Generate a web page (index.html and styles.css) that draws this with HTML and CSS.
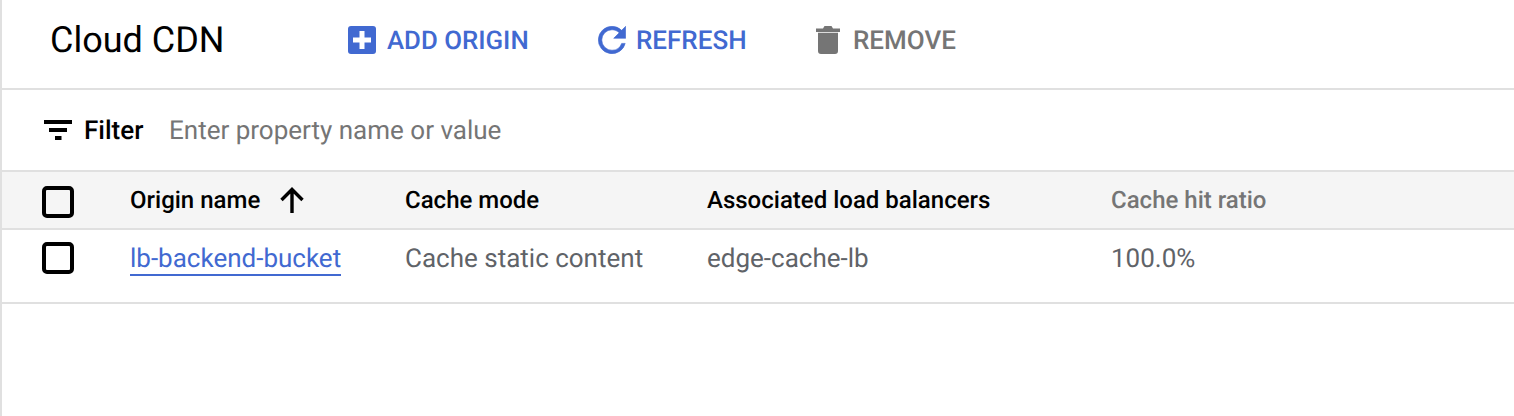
FILE: index.html
```html
<!DOCTYPE html>
<html lang="en">
<head>
<meta charset="utf-8">
<title>Cloud CDN</title>
<link rel="stylesheet" href="styles.css">
</head>
<body>
<div class="page">
  <header class="toolbar">
    <h1 class="title">Cloud CDN</h1>
    <div class="actions">
      <a class="action action-add">
        <svg class="icon-add" viewBox="0 0 28 28"><path fill="#4169d1" d="M3 0h22a3 3 0 0 1 3 3v22a3 3 0 0 1-3 3H3a3 3 0 0 1-3-3V3a3 3 0 0 1 3-3z"/><path fill="#fff" d="M11.500 5h5v6.500H23v5h-6.500V23h-5v-6.500H5v-5h6.500z"/></svg>
        <span class="action-text">ADD ORIGIN</span>
      </a>
      <a class="action action-refresh">
        <svg class="icon-refresh" viewBox="3.800 3.800 16.400 16.400"><path fill="#4169d1" stroke="#4169d1" stroke-width=".35" d="M17.650 6.350A7.958 7.958 0 0 0 12 4a8 8 0 1 0 7.730 10h-2.080A5.990 5.990 0 0 1 12 18a6 6 0 1 1 0-12c1.660 0 3.140.69 4.220 1.780L13 11h7V4l-2.350 2.350z"/></svg>
        <span class="action-text">REFRESH</span>
      </a>
      <a class="action action-remove">
        <svg class="icon-remove" viewBox="0 0 24 28"><path fill="#757575" d="M2 6.800h20V25a3 3 0 0 1-3 3H5a3 3 0 0 1-3-3zM0 2.500h7L8.500 0h7L17 2.500h7V6H0z"/></svg>
        <span class="action-text">REMOVE</span>
      </a>
    </div>
  </header>
  <div class="filter">
    <svg class="icon-filter" viewBox="0 0 28 20"><path fill="#000" d="M0 0h28v4H0zM5 8h18v4H5zM11 16h6.500v4H11z"/></svg>
    <span class="filter-label">Filter</span>
    <span class="filter-hint">Enter property name or value</span>
  </div>
  <div class="row row-head">
    <div class="cell-check cell-check-head"><span class="checkbox"></span></div>
    <div class="col-name head">Origin name
      <svg class="icon-sort" viewBox="0 0 24 26"><path fill="none" stroke="#000" stroke-width="3.400" d="M12 26V3M1.500 13 12 2.500 22.500 13"/></svg>
    </div>
    <div class="col-mode head">Cache mode</div>
    <div class="col-lb head">Associated load balancers</div>
    <div class="col-ratio head-muted">Cache hit ratio</div>
  </div>
  <div class="row row-body">
    <div class="cell-check"><span class="checkbox"></span></div>
    <div class="col-name"><a class="link">lb-backend-bucket</a></div>
    <div class="col-mode cell-text">Cache static content</div>
    <div class="col-lb cell-text">edge-cache-lb</div>
    <div class="col-ratio cell-text">100.0%</div>
  </div>
</div>
</body>
</html>
```
FILE: styles.css
```css
* { box-sizing: border-box; }
html, body { margin: 0; height: 100%; background: #fff; }
body { font-family: Roboto, "Liberation Sans", sans-serif; overflow: hidden; text-rendering: geometricPrecision; }
.page { height: 416px; border-left: 2px solid #e0e0e0; }
.toolbar { height: 90px; display: flex; align-items: center; border-bottom: 2px solid #e0e0e0; padding-left: 48px; padding-bottom: 8px; }
.title { margin: 0; width: 298px; font-size: 36px; font-weight: 400; color: #000; }
.actions { display: flex; align-items: center; }
.action { display: flex; align-items: center; font-size: 26px; font-weight: 500; color: #4169d1; }
.action-text { padding-top: 2px; }
.action-remove { color: #757575; }
.action-add { width: 250px; gap: 11px; font-size: 25.800px; }
.action-refresh { width: 218px; gap: 10px; }
.action-remove { gap: 13px; }
.icon-add { width: 28px; height: 28px; }
.icon-refresh { width: 28px; height: 28px; }
.icon-remove { width: 24px; height: 28px; }
.filter { height: 80px; display: flex; align-items: center; padding-left: 42px; }
.icon-filter { width: 28px; height: 20px; margin-right: 12px; }
.filter-label { font-size: 26px; font-weight: 500; color: #000; width: 85px; padding-top: 2px; }
.filter-hint { font-size: 26px; color: #757575; padding-top: 2px; }
.row { display: flex; align-items: center; font-size: 26px; color: #5f6368; }
.row-head { height: 60px; background: #f5f5f5; border-top: 2px solid #e0e0e0; border-bottom: 2px solid #e0e0e0; font-size: 24px; }
.row-body { height: 74px; border-bottom: 2px solid #e0e0e0; padding-bottom: 16px; }
.cell-check { width: 128px; padding-left: 40px; display: flex; }
.cell-check-head { padding-top: 4px; }
.checkbox { width: 32px; height: 32px; border: 4px solid #000; border-radius: 5px; }
.col-name { width: 275px; display: flex; align-items: center; }
.col-mode { width: 302px; }
.col-lb { width: 404px; }
.cell-text { padding-top: 2px; }
.head { font-weight: 500; color: #000; }
.head-muted { font-weight: 500; color: #757575; }
.icon-sort { width: 24px; height: 26px; margin-left: 20px; }
.link { color: #4169d1; border-bottom: 2px solid #4169d1; line-height: 29px; margin-top: 4px; }
```
